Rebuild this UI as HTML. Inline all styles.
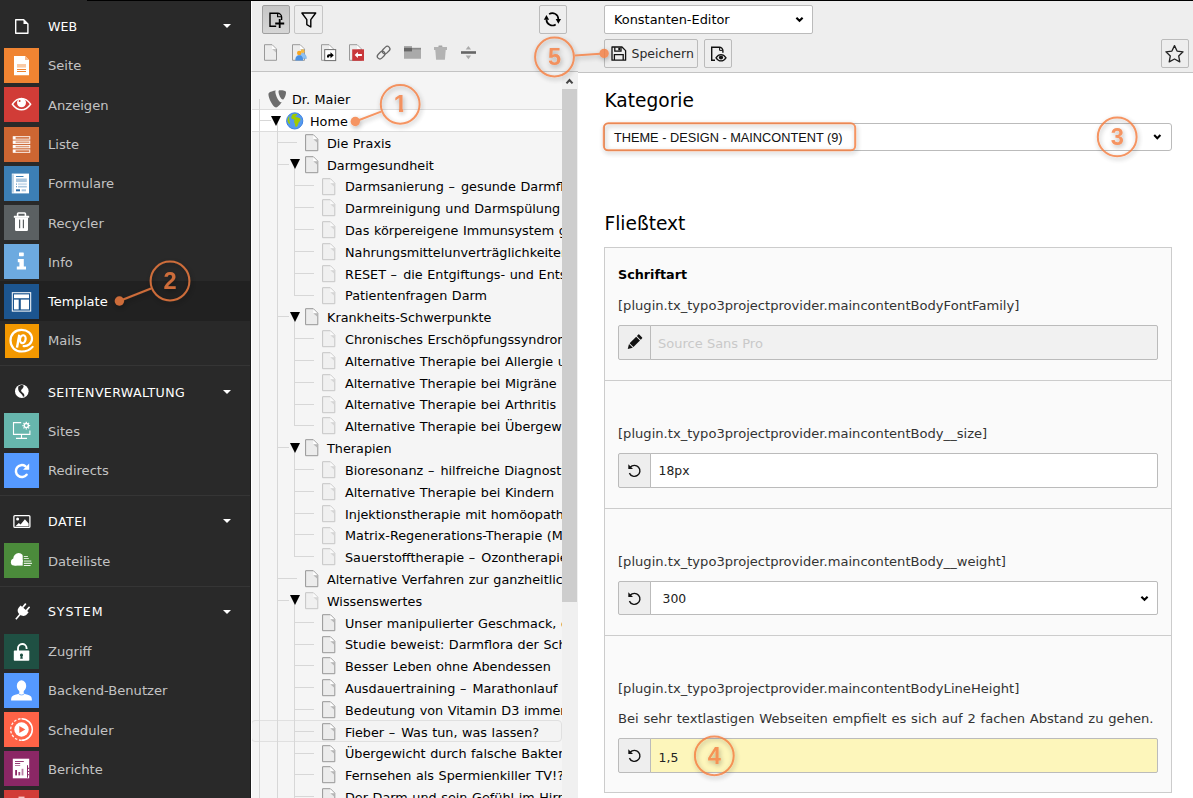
<!DOCTYPE html><html lang="de"><head><meta charset="utf-8"><title>TYPO3 Konstanten-Editor</title><style>
*{box-sizing:border-box;margin:0;padding:0}
html,body{width:1193px;height:798px;overflow:hidden;background:#fff}
body{position:relative;font-family:"DejaVu Sans","Liberation Sans",sans-serif;font-size:13px;color:#000}
.abs{position:absolute}
#side{position:absolute;left:0;top:0;width:251px;height:798px;background:#292929;overflow:hidden;border-right:1px solid #1c1c1c}
#side .sq{position:absolute;left:4px;width:35px;height:35px}
#side .lbl{position:absolute;left:48px;color:#c3c3c3;font-size:13.1px;line-height:16px;white-space:nowrap}
#side .hd{position:absolute;left:48px;color:#fff;font-size:12.6px;line-height:16px;white-space:nowrap}
#side .car{position:absolute;left:223px;width:0;height:0;border-left:4.5px solid transparent;border-right:4.5px solid transparent;border-top:4.5px solid #fff}
#side .div{position:absolute;left:0;width:251px;height:1px;background:#353535}
#topline{position:absolute;left:87px;top:0;width:1106px;height:1px;background:#000;z-index:50}
#tbar{position:absolute;left:251px;top:0;width:327px;height:72px;background:#eeeeee;border-bottom:1px solid #c3c3c3;border-left:1px solid #fff}
#tbar2{position:absolute;left:578px;top:0;width:615px;height:73px;background:#eeeeee;border-bottom:1px solid #c3c3c3}
.btn{position:absolute;border:1px solid #bbb;border-radius:2px;background:#eee}
#tree{position:absolute;left:251px;top:72px;width:311px;height:726px;background:#f5f5f5;overflow:hidden}
#tree .t{position:absolute;word-spacing:.5px;font-size:12.8px;line-height:16px;white-space:nowrap;color:#000}
#tree .vl{position:absolute;width:1px;background:#d7d7d7}
#tree .hl{position:absolute;height:1px;background:#d7d7d7}
#tree .tri{position:absolute;width:0;height:0;border-left:5.5px solid transparent;border-right:5.5px solid transparent;border-top:10px solid #000}
#sb{position:absolute;left:562px;top:72px;width:16px;height:726px;background:#f0f0f0}
#sb .th{position:absolute;left:0;top:17px;width:15px;height:513px;background:#cdcdcd}
#main{position:absolute;left:578px;top:73px;width:615px;height:725px;background:#fff;overflow:hidden}
h2{position:absolute;font-weight:normal;font-size:18.6px;line-height:24px;white-space:nowrap}
.inp{position:absolute;border:1px solid #bbb;background:#fff;border-radius:2px}
.addon{position:absolute;border:1px solid #bbb;background:#eee;border-radius:2px 0 0 2px}
.txt{position:absolute;white-space:nowrap;font-size:13.1px;line-height:16px}
</style></head><body>
<div id="side">
<div class="abs" style="left:0;top:281px;width:251px;height:40px;background:#212121"></div>
<div class="sq" style="top:48.00px;background:#f08432"><svg width="35" height="35" viewBox="0 0 35 35" style="position:absolute;left:0;top:0;"><path d="M10 8h11l4 4v15.2H10z" fill="#fff"/><path d="M21 8l4 4h-4z" fill="#f7b88a"/><rect x="13" y="16" width="9" height="3.6" fill="#f9c9a4"/><rect x="13" y="21" width="9" height="1" fill="#f08432"/><rect x="13" y="23" width="9" height="1" fill="#f08432"/></svg></div>
<div class="lbl" style="top:58.20px;">Seite</div>
<div class="sq" style="top:87.29px;background:#d13c37"><svg width="35" height="35" viewBox="0 0 35 35" style="position:absolute;left:0;top:0;"><path d="M8.4 17.2C11.5 12.6 14.6 11.4 17.5 11.4s6 1.2 9.1 5.8c-3.1 4.3-6.2 5.6-9.1 5.6s-6-1.3-9.1-5.6z" fill="none" stroke="#fff" stroke-width="1.5"/><circle cx="17.5" cy="15.8" r="4.5" fill="#fff"/><circle cx="15.6" cy="14" r="1" fill="#d13c37"/></svg></div>
<div class="lbl" style="top:98.49px;">Anzeigen</div>
<div class="sq" style="top:126.58px;background:#cd6632"><svg width="35" height="35" viewBox="0 0 35 35" style="position:absolute;left:0;top:0;"><rect x="9.2" y="9.700000000000001" width="16.6" height="2.4" fill="none" stroke="#fff" stroke-width=".9"/><rect x="9.2" y="9.700000000000001" width="2.4" height="2.4" fill="#fff"/><rect x="9.2" y="14.0" width="16.6" height="2.4" fill="rgba(255,255,255,.35)" stroke="#fff" stroke-width=".9"/><rect x="9.2" y="14.0" width="2.4" height="2.4" fill="#fff"/><rect x="9.2" y="18.4" width="16.6" height="2.4" fill="rgba(255,255,255,.35)" stroke="#fff" stroke-width=".9"/><rect x="9.2" y="18.4" width="2.4" height="2.4" fill="#fff"/><rect x="9.2" y="22.9" width="16.6" height="2.4" fill="none" stroke="#fff" stroke-width=".9"/><rect x="9.2" y="22.9" width="2.4" height="2.4" fill="#fff"/></svg></div>
<div class="lbl" style="top:136.78px;">Liste</div>
<div class="sq" style="top:165.87px;background:#3c7fb5"><svg width="35" height="35" viewBox="0 0 35 35" style="position:absolute;left:0;top:0;"><rect x="7.8" y="7.6" width="17.2" height="19.8" fill="#fff"/><rect x="8.6" y="8.4" width=".8" height="18.2" fill="#3c7fb5" opacity=".8"/><rect x="12" y="10" width="7.5" height="1" fill="#3c7fb5"/><rect x="12" y="12.5" width="10.8" height="3.6" fill="#a9c6de"/><rect x="12" y="17.6" width="1" height="1" fill="#3c7fb5"/><rect x="14" y="17.3" width="8.8" height="1.6" fill="#c5d9ea"/><rect x="12" y="20.2" width="1" height="1" fill="#3c7fb5"/><rect x="14" y="19.9" width="8.8" height="1.6" fill="#a9c6de"/><rect x="12" y="23.3" width="4" height="2" fill="#2a6ba5"/><rect x="17.6" y="23.3" width="4.4" height="2" fill="#a9c6de"/></svg></div>
<div class="lbl" style="top:176.07px;">Formulare</div>
<div class="sq" style="top:205.16px;background:#5b6062"><svg width="35" height="35" viewBox="0 0 35 35" style="position:absolute;left:0;top:0;"><path d="M13.6 11v-2.2a.8.8 0 0 1 .8-.8h6.2a.8.8 0 0 1 .8.8V11" fill="none" stroke="#fff" stroke-width="1.6"/><rect x="9.8" y="10.8" width="15.4" height="2" rx=".6" fill="#fff"/><path d="M11 12.6h13v12.2a1.2 1.2 0 0 1-1.2 1.2H12.2a1.2 1.2 0 0 1-1.2-1.2z" fill="#fff"/><rect x="15" y="14.6" width="1.2" height="8.6" fill="#5b6062"/><rect x="18.8" y="14.6" width="1.2" height="8.6" fill="#5b6062"/></svg></div>
<div class="lbl" style="top:216.36px;">Recycler</div>
<div class="sq" style="top:244.45px;background:#6daae0"><svg width="35" height="35" viewBox="0 0 35 35" style="position:absolute;left:0;top:0;"><rect x="15" y="8.4" width="4.8" height="3.8" rx=".6" fill="#fff"/><path d="M13.8 15h6v7.4h2.2v3.2h-9.2v-3.2h2.6v-4.2h-1.6z" fill="#fff"/></svg></div>
<div class="lbl" style="top:254.65px;">Info</div>
<div class="sq" style="top:283.74px;background:#1c558f"><svg width="35" height="35" viewBox="0 0 35 35" style="position:absolute;left:0;top:0;"><rect x="8.3" y="8.7" width="18.4" height="18.4" fill="none" stroke="#fff" stroke-width="1"/><rect x="10" y="10.4" width="15" height="3.8" fill="#fff"/><rect x="10" y="15.6" width="4.7" height="9.8" fill="#fff"/><rect x="16.8" y="15.6" width="8.2" height="9.8" fill="#fff"/></svg></div>
<div class="lbl" style="top:293.94px;color:#fff">Template</div>
<div class="sq" style="top:323.03px;background:#f39800"><svg width="35" height="35" viewBox="0 0 35 35" style="position:absolute;left:0;top:0;"><rect x="0" y="0" width="35" height="35" fill="#292929"/><rect x="1" y="1" width="34" height="34" fill="#f39800"/><g transform="translate(0 .6)"><path d="M19.600 22.500C23.500 23 28 20 28 15.200C28 9.800 23.500 6.300 17.400 6.300C11 6.300 6.500 10.700 6.500 17C6.500 23.300 11 27.900 17.600 27.900C22 27.900 26 26.400 28.600 23.300" fill="none" stroke="#fff" stroke-width="2.200" stroke-linecap="round"/><path d="M15.300 11.200L13 24" stroke="#fff" stroke-width="2.400" fill="none"/><ellipse cx="18.800" cy="15.600" rx="2.800" ry="4" transform="rotate(12 18.800 15.600)" fill="none" stroke="#fff" stroke-width="2.200"/></g></svg></div>
<div class="lbl" style="top:333.23px;">Mails</div>
<div class="hd" style="top:19.00px;">WEB</div>
<div class="car" style="top:24px"></div>
<svg width="16" height="17" viewBox="0 0 16 17" style="position:absolute;left:14px;top:18px"><path d="M1.700 1.700h8l4.200 4.200v9.400H1.700z" fill="none" stroke="#fff" stroke-width="1.400" stroke-linejoin="round"/><path d="M9.500 1.700v4.400h4.400z" fill="#fff"/></svg>
<div class="div" style="top:365px"></div>
<div class="hd" style="top:385.00px;letter-spacing:.36px">SEITENVERWALTUNG</div>
<div class="car" style="top:390px"></div>
<svg width="16" height="16" viewBox="0 0 16 16" style="position:absolute;left:14px;top:383px"><circle cx="7.800" cy="8.200" r="6.800" fill="#fff"/><path d="M4.300 3.500c1-.9 2.400-1.500 3.800-1.500l1.400.5c.3 1.200-.3 2.300-1.100 3.200-.8.900-1.500 1.300-1.200 2.300.3 1 1.500 1.600 2.400 2.600.7.800 1 1.800.6 3.200l-1.300-.3c-.3-1.400-1.300-2.200-2.300-3.200-1-1-2-2-2.300-3.600-.2-1.200-.2-2.300 0-3.200z" fill="#292929"/></svg>
<div class="sq" style="top:413.00px;background:#67b6ad"><svg width="35" height="35" viewBox="0 0 35 35" style="position:absolute;left:0;top:0;"><path d="M17.2 9.600H9.500v11.800h16.400v-4" fill="none" stroke="#fff" stroke-width="1.1"/><path d="M17.500 21.400v3.800M12 25.400h11" stroke="#fff" stroke-width="1.1" fill="none"/><circle cx="22.3" cy="12.6" r="2.100" fill="none" stroke="#fff" stroke-width="1.300"/><path d="M25.00 12.60L26.20 12.60M24.21 14.51L25.06 15.36M22.30 15.30L22.30 16.50M20.39 14.51L19.54 15.36M19.60 12.60L18.40 12.60M20.39 10.69L19.54 9.84M22.30 9.90L22.30 8.70M24.21 10.69L25.06 9.84" stroke="#fff" stroke-width="1.300" fill="none"/></svg></div>
<div class="lbl" style="top:424.00px;">Sites</div>
<div class="sq" style="top:453.00px;background:#5599ff"><svg width="35" height="35" viewBox="0 0 35 35" style="position:absolute;left:0;top:0;"><path d="M22.600 21.800a6 6 0 1 1-1.2-8.600" fill="none" stroke="#fff" stroke-width="2.500" stroke-linecap="round"/><path d="M25.200 10.600v6.200h-6.200z" fill="#fff"/></svg></div>
<div class="lbl" style="top:463.00px;">Redirects</div>
<div class="div" style="top:495px"></div>
<div class="hd" style="top:513.50px;letter-spacing:.44px">DATEI</div>
<div class="car" style="top:519px"></div>
<svg width="18" height="15" viewBox="0 0 18 15" style="position:absolute;left:13px;top:514px"><rect x=".9" y="1.600" width="16" height="11.800" rx="1" fill="none" stroke="#fff" stroke-width="1.300"/><circle cx="4.600" cy="5" r="1.500" fill="#fff"/><path d="M2.400 12.200l3.400-3.300 1.800 1.500 4.300-5.200 3.700 4.400v2.600z" fill="#fff"/></svg>
<div class="sq" style="top:543.00px;background:#4b8b3b"><svg width="35" height="35" viewBox="0 0 35 35" style="position:absolute;left:0;top:0;"><clipPath id="cl"><rect x="0" y="0" width="18.700" height="22.800"/></clipPath><g clip-path="url(#cl)" fill="#fff"><circle cx="10.500" cy="19.200" r="3.600"/><circle cx="14.700" cy="15.500" r="5.400"/><rect x="10.500" y="17" width="9" height="5.800"/></g><rect x="19.800" y="13.100" width="4.100" height=".9" fill="#fff" opacity=".9"/><rect x="19.800" y="15.100" width="5" height=".9" fill="#fff" opacity=".85"/><rect x="19.800" y="17.300" width="7.500" height="1.600" fill="#fff" opacity=".55"/><rect x="19.800" y="19.800" width="8.200" height="1.100" fill="#fff" opacity=".9"/><rect x="19.800" y="22" width="6.800" height=".9" fill="#fff"/></svg></div>
<div class="lbl" style="top:554.00px;">Dateiliste</div>
<div class="div" style="top:586px"></div>
<div class="hd" style="top:604.20px;letter-spacing:.86px">SYSTEM</div>
<div class="car" style="top:610px"></div>
<svg width="18" height="18" viewBox="0 0 18 18" style="position:absolute;left:13px;top:603px"><g transform="rotate(40 9 9)"><rect x="5.700" y="0" width="1.700" height="5.600" rx=".8" fill="#fff"/><rect x="10.600" y="0" width="1.700" height="5.600" rx=".8" fill="#fff"/><path d="M3.700 5h10.600v2.600c0 3-2.300 4.800-5.300 4.800s-5.300-1.800-5.300-4.800z" fill="#fff"/><rect x="8.200" y="12" width="1.600" height="6.500" fill="#fff"/></g></svg>
<div class="sq" style="top:633.80px;background:#1f5043"><svg width="35" height="35" viewBox="0 0 35 35" style="position:absolute;left:0;top:0;"><rect x="9.800" y="16.600" width="15.500" height="10.200" rx=".8" fill="#fff"/><path d="M14 17v-2.500a4.300 4.300 0 0 1 8.600-.3v.8" fill="none" stroke="#fff" stroke-width="1.900"/><path d="M17.500 19.500a1.600 1.600 0 0 1 .9 2.900l.4 2.400h-2.600l.4-2.400a1.600 1.600 0 0 1 .9-2.900z" fill="#1f5043"/></svg></div>
<div class="lbl" style="top:643.50px;">Zugriff</div>
<div class="sq" style="top:672.59px;background:#5599ff"><svg width="35" height="35" viewBox="0 0 35 35" style="position:absolute;left:0;top:0;"><ellipse cx="17.500" cy="13" rx="4.700" ry="5.700" fill="#fff"/><path d="M15.300 17h4.400v3.400c2.400 1 6 1.400 7.300 3.200.7 1 .9 2.400.9 4H7.100c0-1.600.2-3 .9-4 1.300-1.800 4.900-2.200 7.300-3.200z" fill="#fff"/><path d="M14.600 20.800a3.400 2.400 0 0 0 5.800 0" fill="none" stroke="#5599ff" stroke-width=".7"/></svg></div>
<div class="lbl" style="top:683.49px;">Backend-Benutzer</div>
<div class="sq" style="top:711.88px;background:#ff6347"><svg width="35" height="35" viewBox="0 0 35 35" style="position:absolute;left:0;top:0;"><circle cx="17.500" cy="17.500" r="7.200" fill="#fff"/><path d="M15.300 13.900l6 3.600-6 3.600z" fill="#ff6347"/><path d="M17.500 6.700a10.800 10.800 0 0 1 0 21.600" fill="none" stroke="#fff" stroke-width="1.500"/><path d="M17.500 28.300a10.800 10.800 0 0 1 0-21.600" fill="none" stroke="#fff" stroke-width="1.300" stroke-dasharray="2.600 1.700" opacity=".9"/></svg></div>
<div class="lbl" style="top:722.78px;">Scheduler</div>
<div class="sq" style="top:751.17px;background:#8b2765"><svg width="35" height="35" viewBox="0 0 35 35" style="position:absolute;left:0;top:0;"><rect x="8.800" y="7.700" width="16.400" height="19.600" fill="#fff"/><rect x="11" y="10" width="8.800" height=".9" fill="#8b2765"/><rect x="11" y="12" width="5.200" height=".9" fill="#8b2765"/><rect x="11" y="14" width="5.200" height=".9" fill="#8b2765" opacity=".7"/><rect x="11.200" y="19" width="1.800" height="5.400" fill="#8b2765"/><rect x="14.400" y="21" width="1.800" height="3.400" fill="#8b2765" opacity=".85"/><rect x="17.600" y="17.800" width="1.800" height="6.600" fill="#8b2765" opacity=".6"/><rect x="23" y="14.200" width="1" height="12.500" fill="#8b2765"/><rect x="24" y="16.800" width="1.200" height="1" fill="#8b2765"/><rect x="24" y="20" width="1.200" height="1" fill="#8b2765"/><rect x="24" y="23.200" width="1.200" height="1" fill="#8b2765"/></svg></div>
<div class="lbl" style="top:762.07px;">Berichte</div>
<div class="sq" style="top:790.46px;background:#d13c37"><svg width="35" height="35" viewBox="0 0 35 35" style="position:absolute;left:0;top:0;"><rect x="14.500" y="6.600" width="6" height="2" fill="#f4c8c6"/></svg></div>
</div>
<div id="tbar"></div><div id="tbar2"></div><div id="topline"></div>
<div class="btn" style="left:262px;top:5px;width:28px;height:29px;background:linear-gradient(#c6c6c6,#d6d6d6);border-color:#a0a0a0"><svg width="28" height="29" viewBox="0 0 28 29" style="position:absolute;left:-1px;top:-1px;"><path d="M14.200 21.200H8v-13h7.600a4 4 0 0 1 4 4v2.800" fill="none" stroke="#000" stroke-width="1.400"/><path d="M15.600 8.400v3.300h3.600" fill="none" stroke="#000" stroke-width="1.100"/><path d="M17.700 14v9M13.200 18.500h9" stroke="#000" stroke-width="1.800"/></svg></div>
<div class="btn" style="left:294px;top:5px;width:29px;height:29px;border-color:#c6c6c6"><svg width="28" height="29" viewBox="0 0 28 29" style="position:absolute;left:-1px;top:-1px;"><path d="M7.900 8h13.800l-4.900 6.600v7.400l-4-2.400v-5z" fill="none" stroke="#000" stroke-width="1.400" stroke-linejoin="round"/></svg></div>
<div class="btn" style="left:539px;top:5px;width:28px;height:29px"><svg width="28" height="29" viewBox="0 0 28 29" style="position:absolute;left:-1px;top:-1px;"><g transform="translate(13.4 14.3) scale(1.1) translate(-13.4 -14.3)"><path d="M10.400 9.600a5.400 5.400 0 0 1 8.400 4.600" fill="none" stroke="#000" stroke-width="1.500"/><path d="M16.400 19a5.400 5.400 0 0 1-8.400-4.400" fill="none" stroke="#000" stroke-width="1.500"/><path d="M16.400 14h4.800l-2.400 4.400z" fill="#000"/><path d="M5.600 14.800h4.800l-2.400-4.500z" fill="#000"/></g></svg></div>
<svg width="1193" height="72" viewBox="0 0 1193 72" style="position:absolute;left:0;top:0"><g transform="translate(264,44.2)"><path d="M.5.500h7.600l4.400 4.400v11.200H.5z" fill="#ececec" stroke="#999" stroke-width="1"/><path d="M8.100 1v3.900h3.900z" fill="#fff"/><path d="M8.100 4.900h3.900v3.400z" fill="#c4c4c4"/></g><g transform="translate(292,44.2)"><path d="M.5.500h7.600l4.400 4.400v11.200H.5z" fill="#ececec" stroke="#999" stroke-width="1"/><path d="M8.100 1v3.900h3.900z" fill="#fff"/><path d="M8.100 4.900h3.900v3.400z" fill="#c4c4c4"/></g><g><circle cx="302.600" cy="51.200" r="1.900" fill="#f5b93f"/><path d="M299.700 58.500c0-3.600 1.200-5.200 2.900-5.200s3.800 1.600 3.800 5.200z" fill="#8fc1f2" stroke="#6ea6de" stroke-width=".5"/><circle cx="299.200" cy="53" r="2.200" fill="#f5a623"/><path d="M295.300 60.400c0-3.800 1.500-5.200 3.900-5.200s3.900 1.400 3.900 5.200z" fill="#4a90e2"/></g><g transform="translate(321,44.2)"><path d="M.5.500h7.600l4.400 4.400v11.200H.5z" fill="#ececec" stroke="#999" stroke-width="1"/><path d="M8.100 1v3.900h3.900z" fill="#fff"/><path d="M8.100 4.900h3.900v3.400z" fill="#c4c4c4"/></g><rect x="324.700" y="49.600" width="11" height="11" fill="#fff" stroke="#6f6f6f" stroke-width="1"/><path d="M327 57.500v-1.500a1.800 1.800 0 0 1 1.800-1.800h1.700v-2l3.300 3-3.300 3v-2h-1.400v1.300z" fill="#000"/><g transform="translate(349,44.2)"><path d="M.5.500h7.600l4.400 4.400v11.200H.5z" fill="#ececec" stroke="#999" stroke-width="1"/><path d="M8.100 1v3.900h3.900z" fill="#fff"/><path d="M8.100 4.900h3.900v3.400z" fill="#c4c4c4"/></g><rect x="352.200" y="49.300" width="11.800" height="11.500" fill="#c9373a"/><path d="M354.600 55l3.300-3v2h4v2h-4v2z" fill="#fff"/><g transform="rotate(-45 383.600 52.600)" fill="none" stroke="#666" stroke-width="1.250"><rect x="375.800" y="50" width="8.600" height="5.200" rx="2.600"/><rect x="382.800" y="50" width="8.600" height="5.200" rx="2.600"/></g><path d="M404 46h8v2h9v10.800h-17z" fill="#aaa"/><path d="M404 47.800h8v3.600h-8z" fill="#666"/><path d="M412 47.800h9v1.700h-9z" fill="#8a8a8a"/><rect x="438.400" y="45.400" width="4" height="1.800" rx=".6" fill="#a5a5a5"/><rect x="434" y="47" width="13" height="3" fill="#b3b3b3"/><path d="M435.300 50h10.400l-.8 9.800h-8.800z" fill="#b3b3b3"/><rect x="461" y="51.200" width="15" height="2.600" fill="#666"/><path d="M465.700 49.500l2.700-3.600 2.700 3.600z" fill="#aaa"/><path d="M465.700 55.600h5.400l-2.700 3.600z" fill="#aaa"/></svg>
<div class="btn" style="left:604px;top:5px;width:209px;height:29px;background:#fff"><span class="txt" style="left:9px;top:6px;font-size:12.9px">Konstanten-Editor</span><svg width="209" height="29" viewBox="0 0 209 29" style="position:absolute;left:-1px;top:-1px;"><path d="M192.4 12.75l3.1 3.1 3.1-3.1" fill="none" stroke="#000" stroke-width="2.1"/></svg></div>
<div class="btn" style="left:604px;top:39px;width:94px;height:29px"><span class="txt" style="left:26.5px;top:6.2px;color:#2a2a2a;font-size:12.5px">Speichern</span><svg width="30" height="29" viewBox="0 0 30 29" style="position:absolute;left:-1px;top:-1px;"><path d="M8 8h10l3.600 3.600v9.600H8z" fill="none" stroke="#111" stroke-width="1.300" stroke-linejoin="round"/><path d="M10.800 8.200v4h6.200v-4" fill="none" stroke="#111" stroke-width="1.300"/><rect x="14.300" y="8.800" width="1.900" height="2.600" fill="#111"/><path d="M10.400 21v-5.300h8.800V21" fill="none" stroke="#111" stroke-width="1.300"/></svg></div>
<div class="btn" style="left:704px;top:39px;width:28px;height:29px"><svg width="28" height="29" viewBox="0 0 28 29" style="position:absolute;left:-1px;top:-1px;"><path d="M11 21.200H7.700v-13h7.600a3.600 3.600 0 0 1 3.600 3.600v2" fill="none" stroke="#111" stroke-width="1.400"/><path d="M15.600 8.400v3h3" fill="none" stroke="#111" stroke-width="1"/><path d="M12 18.800c1.600-2.400 3.300-3.200 5-3.200s3.400.8 5 3.200c-1.600 2.300-3.300 3.100-5 3.100s-3.400-.8-5-3.100z" fill="#eee" stroke="#111" stroke-width="1.300"/><circle cx="17" cy="18.500" r="2.100" fill="#111"/></svg></div>
<div class="btn" style="left:1161px;top:39px;width:28px;height:29px"><svg width="28" height="29" viewBox="0 0 28 29" style="position:absolute;left:-1px;top:-1px;"><polygon points="13.50,6.60 16.09,12.04 22.06,12.82 17.68,16.96 18.79,22.88 13.50,20.00 8.21,22.88 9.32,16.96 4.94,12.82 10.91,12.04" fill="none" stroke="#222" stroke-width="1.300" stroke-linejoin="round"/></svg></div>
<div id="tree">
<div class="abs" style="left:0;top:36.81px;width:311px;height:23px;background:#fff;border-top:1px solid #ddd;border-bottom:1px solid #ddd"></div>
<div class="abs" style="left:0;top:648.19px;width:311px;height:22px;background:#f3f3f3;border:1px solid #e0e0e0;border-radius:4px"></div>
<div class="vl" style="left:7.9px;top:26.7px;height:800px"></div>
<div class="vl" style="left:26.0px;top:48.5px;height:800px"></div>
<div class="vl" style="left:42.9px;top:92.1px;height:130.9px"></div>
<div class="vl" style="left:42.9px;top:244.8px;height:109.0px"></div>
<div class="vl" style="left:42.9px;top:375.7px;height:109.1px"></div>
<div class="vl" style="left:42.9px;top:528.3px;height:370.8px"></div>
<div class="abs" style="left:17px;top:17.7px"><svg width="20" height="19" viewBox="0 0 20 19" style="display:block"><path transform="translate(-2.300,-2.200) scale(1.440,1.390)" d="M11.100 10.300c-.2 0-.3.100-.5.100-1.600 0-3.900-5.500-3.900-7.400 0-.7.200-.9.400-1.100-1.900.2-4.200.9-4.900 1.800-.2.200-.3.600-.3 1 0 2.900 3.100 9.500 5.300 9.500 1 0 2.700-1.700 3.900-3.900M10.100 1.800c2 0 4 .3 4 1.500 0 2.300-1.500 5.100-2.200 5.100-1.300 0-3-3.700-3-5.600 0-.8.300-1 1.200-1" fill="#6d6d6d"/></svg></div>
<div class="t" style="left:41.0px;top:20.1px">Dr. Maier</div>
<div class="hl" style="left:7.9px;top:48.0px;width:12px"></div>
<div class="tri" style="left:20.4px;top:43.5px"></div>
<div class="abs" style="left:35px;top:39.5px"><svg width="18" height="18" viewBox="0 0 18 18" style="display:block"><circle cx="8.700" cy="8.900" r="8.100" fill="#5599f0" stroke="#3f83e0" stroke-width="1"/><path d="M6.500 2.400c1.400-.8 3-.9 4.400-.5.600.5.400 1.200-.3 1.400-.8.200-1.300.6-1.100 1.400.2.700 1.500.3 2.300.8.900.6 2.200.4 2.600 1.400.4 1-.6 2.400-1.500 3.400-.8.900-.7 2-1.300 3.200-.4.800-1.200 1.600-1.900 1.300-.7-.3-.5-1.400-.6-2.400-.1-1-.9-1.500-1-2.500-.1-.9.500-1.300.2-2-.4-.9-2-.4-2.700-1.300-.6-.8-.3-2 .2-2.800.3-.5.300-1 .7-1.400z" fill="#a2cb00"/><path d="M1.500 7.500c.3-1.500 1-2.800 2-3.800.3.700-.2 1.500-.3 2.300-.1.900.5 1.500.3 2.400-.2.800.5 1.600.5 2.500 0 .6-.3 1.100-.8 1-1.200-1.200-1.900-2.800-1.700-4.400z" fill="#a2cb00"/></svg></div>
<div class="t" style="left:59.0px;top:41.9px">Home</div>
<div class="hl" style="left:26.0px;top:69.8px;width:20px"></div>
<div class="abs" style="left:53.9px;top:61.9px"><svg width="14" height="18" viewBox="0 0 14 18" style="display:block"><path d="M.6.700h7.700l4.500 4.500v11.500H.6z" fill="#ececec" stroke="#979797" stroke-width="1"/><path d="M8.300 1.200v4h4z" fill="#fff"/><path d="M8.300 5.200h4v3.600z" fill="#b8b8b8"/></svg></div>
<div class="t" style="left:76.0px;top:63.7px">Die Praxis</div>
<div class="hl" style="left:26.0px;top:91.6px;width:12px"></div>
<div class="tri" style="left:38.5px;top:87.1px"></div>
<div class="abs" style="left:53.9px;top:83.7px"><svg width="14" height="18" viewBox="0 0 14 18" style="display:block"><path d="M.6.700h7.700l4.500 4.500v11.500H.6z" fill="#ececec" stroke="#979797" stroke-width="1"/><path d="M8.300 1.200v4h4z" fill="#fff"/><path d="M8.300 5.200h4v3.600z" fill="#b8b8b8"/></svg></div>
<div class="t" style="left:76.0px;top:85.5px">Darmgesundheit</div>
<div class="hl" style="left:42.9px;top:113.4px;width:20px"></div>
<div class="abs" style="left:71.2px;top:105.5px"><svg width="14" height="18" viewBox="0 0 14 18" style="display:block" opacity="0.5"><path d="M.6.700h7.700l4.500 4.500v11.500H.6z" fill="#ececec" stroke="#979797" stroke-width="1"/><path d="M8.300 1.200v4h4z" fill="#fff"/><path d="M8.300 5.200h4v3.600z" fill="#b8b8b8"/></svg></div>
<div class="t" style="left:94.0px;top:107.3px">Darmsanierung <span style="letter-spacing:1.6px">–</span> gesunde Darmflora</div>
<div class="hl" style="left:42.9px;top:135.2px;width:20px"></div>
<div class="abs" style="left:71.2px;top:127.3px"><svg width="14" height="18" viewBox="0 0 14 18" style="display:block" opacity="0.5"><path d="M.6.700h7.700l4.500 4.500v11.500H.6z" fill="#ececec" stroke="#979797" stroke-width="1"/><path d="M8.300 1.200v4h4z" fill="#fff"/><path d="M8.300 5.200h4v3.600z" fill="#b8b8b8"/></svg></div>
<div class="t" style="left:94.0px;top:129.2px">Darmreinigung und Darmspülung richtig</div>
<div class="hl" style="left:42.9px;top:157.1px;width:20px"></div>
<div class="abs" style="left:71.2px;top:149.2px"><svg width="14" height="18" viewBox="0 0 14 18" style="display:block" opacity="0.5"><path d="M.6.700h7.700l4.500 4.500v11.500H.6z" fill="#ececec" stroke="#979797" stroke-width="1"/><path d="M8.300 1.200v4h4z" fill="#fff"/><path d="M8.300 5.200h4v3.600z" fill="#b8b8b8"/></svg></div>
<div class="t" style="left:94.0px;top:151.0px">Das körpereigene Immunsystem gezielt</div>
<div class="hl" style="left:42.9px;top:178.9px;width:20px"></div>
<div class="abs" style="left:71.2px;top:171.0px"><svg width="14" height="18" viewBox="0 0 14 18" style="display:block" opacity="0.5"><path d="M.6.700h7.700l4.500 4.500v11.500H.6z" fill="#ececec" stroke="#979797" stroke-width="1"/><path d="M8.300 1.200v4h4z" fill="#fff"/><path d="M8.300 5.200h4v3.600z" fill="#b8b8b8"/></svg></div>
<div class="t" style="left:94.0px;top:172.8px">Nahrungsmittelunverträglichkeiten</div>
<div class="hl" style="left:42.9px;top:200.7px;width:20px"></div>
<div class="abs" style="left:71.2px;top:192.8px"><svg width="14" height="18" viewBox="0 0 14 18" style="display:block" opacity="0.5"><path d="M.6.700h7.700l4.500 4.500v11.500H.6z" fill="#ececec" stroke="#979797" stroke-width="1"/><path d="M8.300 1.200v4h4z" fill="#fff"/><path d="M8.300 5.200h4v3.600z" fill="#b8b8b8"/></svg></div>
<div class="t" style="left:94.0px;top:194.6px">RESET <span style="letter-spacing:1.6px">–</span> die Entgiftungs- und Entsäuerung</div>
<div class="hl" style="left:42.9px;top:222.5px;width:20px"></div>
<div class="abs" style="left:71.2px;top:214.6px"><svg width="14" height="18" viewBox="0 0 14 18" style="display:block" opacity="0.5"><path d="M.6.700h7.700l4.500 4.500v11.500H.6z" fill="#ececec" stroke="#979797" stroke-width="1"/><path d="M8.300 1.200v4h4z" fill="#fff"/><path d="M8.300 5.200h4v3.600z" fill="#b8b8b8"/></svg></div>
<div class="t" style="left:94.0px;top:216.4px">Patientenfragen Darm</div>
<div class="hl" style="left:26.0px;top:244.3px;width:12px"></div>
<div class="tri" style="left:38.5px;top:239.8px"></div>
<div class="abs" style="left:53.9px;top:236.4px"><svg width="14" height="18" viewBox="0 0 14 18" style="display:block"><path d="M.6.700h7.700l4.500 4.500v11.500H.6z" fill="#ececec" stroke="#979797" stroke-width="1"/><path d="M8.300 1.200v4h4z" fill="#fff"/><path d="M8.300 5.200h4v3.600z" fill="#b8b8b8"/></svg></div>
<div class="t" style="left:76.0px;top:238.2px">Krankheits-Schwerpunkte</div>
<div class="hl" style="left:42.9px;top:266.1px;width:20px"></div>
<div class="abs" style="left:71.2px;top:258.2px"><svg width="14" height="18" viewBox="0 0 14 18" style="display:block" opacity="0.5"><path d="M.6.700h7.700l4.500 4.500v11.500H.6z" fill="#ececec" stroke="#979797" stroke-width="1"/><path d="M8.300 1.200v4h4z" fill="#fff"/><path d="M8.300 5.200h4v3.600z" fill="#b8b8b8"/></svg></div>
<div class="t" style="left:94.0px;top:260.0px">Chronisches Erschöpfungssyndrom</div>
<div class="hl" style="left:42.9px;top:287.9px;width:20px"></div>
<div class="abs" style="left:71.2px;top:280.0px"><svg width="14" height="18" viewBox="0 0 14 18" style="display:block" opacity="0.5"><path d="M.6.700h7.700l4.500 4.500v11.500H.6z" fill="#ececec" stroke="#979797" stroke-width="1"/><path d="M8.300 1.200v4h4z" fill="#fff"/><path d="M8.300 5.200h4v3.600z" fill="#b8b8b8"/></svg></div>
<div class="t" style="left:94.0px;top:281.8px">Alternative Therapie bei Allergie und</div>
<div class="hl" style="left:42.9px;top:309.7px;width:20px"></div>
<div class="abs" style="left:71.2px;top:301.8px"><svg width="14" height="18" viewBox="0 0 14 18" style="display:block" opacity="0.5"><path d="M.6.700h7.700l4.500 4.500v11.500H.6z" fill="#ececec" stroke="#979797" stroke-width="1"/><path d="M8.300 1.200v4h4z" fill="#fff"/><path d="M8.300 5.200h4v3.600z" fill="#b8b8b8"/></svg></div>
<div class="t" style="left:94.0px;top:303.6px">Alternative Therapie bei Migräne</div>
<div class="hl" style="left:42.9px;top:331.5px;width:20px"></div>
<div class="abs" style="left:71.2px;top:323.6px"><svg width="14" height="18" viewBox="0 0 14 18" style="display:block" opacity="0.5"><path d="M.6.700h7.700l4.500 4.500v11.500H.6z" fill="#ececec" stroke="#979797" stroke-width="1"/><path d="M8.300 1.200v4h4z" fill="#fff"/><path d="M8.300 5.200h4v3.600z" fill="#b8b8b8"/></svg></div>
<div class="t" style="left:94.0px;top:325.4px">Alternative Therapie bei Arthritis</div>
<div class="hl" style="left:42.9px;top:353.3px;width:20px"></div>
<div class="abs" style="left:71.2px;top:345.4px"><svg width="14" height="18" viewBox="0 0 14 18" style="display:block" opacity="0.5"><path d="M.6.700h7.700l4.500 4.500v11.500H.6z" fill="#ececec" stroke="#979797" stroke-width="1"/><path d="M8.300 1.200v4h4z" fill="#fff"/><path d="M8.300 5.200h4v3.600z" fill="#b8b8b8"/></svg></div>
<div class="t" style="left:94.0px;top:347.2px">Alternative Therapie bei Übergewicht</div>
<div class="hl" style="left:26.0px;top:375.2px;width:12px"></div>
<div class="tri" style="left:38.5px;top:370.7px"></div>
<div class="abs" style="left:53.9px;top:367.3px"><svg width="14" height="18" viewBox="0 0 14 18" style="display:block"><path d="M.6.700h7.700l4.500 4.500v11.500H.6z" fill="#ececec" stroke="#979797" stroke-width="1"/><path d="M8.300 1.200v4h4z" fill="#fff"/><path d="M8.300 5.200h4v3.600z" fill="#b8b8b8"/></svg></div>
<div class="t" style="left:76.0px;top:369.1px">Therapien</div>
<div class="hl" style="left:42.9px;top:397.0px;width:20px"></div>
<div class="abs" style="left:71.2px;top:389.1px"><svg width="14" height="18" viewBox="0 0 14 18" style="display:block" opacity="0.5"><path d="M.6.700h7.700l4.500 4.500v11.500H.6z" fill="#ececec" stroke="#979797" stroke-width="1"/><path d="M8.300 1.200v4h4z" fill="#fff"/><path d="M8.300 5.200h4v3.600z" fill="#b8b8b8"/></svg></div>
<div class="t" style="left:94.0px;top:390.9px">Bioresonanz <span style="letter-spacing:1.6px">–</span> hilfreiche Diagnostik</div>
<div class="hl" style="left:42.9px;top:418.8px;width:20px"></div>
<div class="abs" style="left:71.2px;top:410.9px"><svg width="14" height="18" viewBox="0 0 14 18" style="display:block" opacity="0.5"><path d="M.6.700h7.700l4.500 4.500v11.500H.6z" fill="#ececec" stroke="#979797" stroke-width="1"/><path d="M8.300 1.200v4h4z" fill="#fff"/><path d="M8.300 5.200h4v3.600z" fill="#b8b8b8"/></svg></div>
<div class="t" style="left:94.0px;top:412.7px">Alternative Therapie bei Kindern</div>
<div class="hl" style="left:42.9px;top:440.6px;width:20px"></div>
<div class="abs" style="left:71.2px;top:432.7px"><svg width="14" height="18" viewBox="0 0 14 18" style="display:block" opacity="0.5"><path d="M.6.700h7.700l4.500 4.500v11.500H.6z" fill="#ececec" stroke="#979797" stroke-width="1"/><path d="M8.300 1.200v4h4z" fill="#fff"/><path d="M8.300 5.200h4v3.600z" fill="#b8b8b8"/></svg></div>
<div class="t" style="left:94.0px;top:434.5px">Injektionstherapie mit homöopathischen</div>
<div class="hl" style="left:42.9px;top:462.4px;width:20px"></div>
<div class="abs" style="left:71.2px;top:454.5px"><svg width="14" height="18" viewBox="0 0 14 18" style="display:block" opacity="0.5"><path d="M.6.700h7.700l4.500 4.500v11.500H.6z" fill="#ececec" stroke="#979797" stroke-width="1"/><path d="M8.300 1.200v4h4z" fill="#fff"/><path d="M8.300 5.200h4v3.600z" fill="#b8b8b8"/></svg></div>
<div class="t" style="left:94.0px;top:456.3px">Matrix-Regenerations-Therapie (MRT)</div>
<div class="hl" style="left:42.9px;top:484.2px;width:20px"></div>
<div class="abs" style="left:71.2px;top:476.3px"><svg width="14" height="18" viewBox="0 0 14 18" style="display:block" opacity="0.5"><path d="M.6.700h7.700l4.500 4.500v11.500H.6z" fill="#ececec" stroke="#979797" stroke-width="1"/><path d="M8.300 1.200v4h4z" fill="#fff"/><path d="M8.300 5.200h4v3.600z" fill="#b8b8b8"/></svg></div>
<div class="t" style="left:94.0px;top:478.1px">Sauerstofftherapie <span style="letter-spacing:1.6px">–</span> Ozontherapie</div>
<div class="hl" style="left:26.0px;top:506.0px;width:20px"></div>
<div class="abs" style="left:53.9px;top:498.1px"><svg width="14" height="18" viewBox="0 0 14 18" style="display:block"><path d="M.6.700h7.700l4.500 4.500v11.500H.6z" fill="#ececec" stroke="#979797" stroke-width="1"/><path d="M8.300 1.200v4h4z" fill="#fff"/><path d="M8.300 5.200h4v3.600z" fill="#b8b8b8"/></svg></div>
<div class="t" style="left:76.0px;top:499.9px">Alternative Verfahren zur ganzheitlichen</div>
<div class="hl" style="left:26.0px;top:527.8px;width:12px"></div>
<div class="tri" style="left:38.5px;top:523.3px"></div>
<div class="abs" style="left:53.9px;top:519.9px"><svg width="14" height="18" viewBox="0 0 14 18" style="display:block" opacity="0.5"><path d="M.6.700h7.700l4.500 4.500v11.500H.6z" fill="#ececec" stroke="#979797" stroke-width="1"/><path d="M8.300 1.200v4h4z" fill="#fff"/><path d="M8.300 5.200h4v3.600z" fill="#b8b8b8"/></svg></div>
<div class="t" style="left:76.0px;top:521.7px">Wissenswertes</div>
<div class="hl" style="left:42.9px;top:549.6px;width:20px"></div>
<div class="abs" style="left:71.2px;top:541.7px"><svg width="14" height="18" viewBox="0 0 14 18" style="display:block"><path d="M.6.700h7.700l4.500 4.500v11.500H.6z" fill="#ececec" stroke="#979797" stroke-width="1"/><path d="M8.300 1.200v4h4z" fill="#fff"/><path d="M8.300 5.200h4v3.600z" fill="#b8b8b8"/></svg></div>
<div class="t" style="left:94.0px;top:543.5px">Unser manipulierter Geschmack, oder</div>
<div class="hl" style="left:42.9px;top:571.5px;width:20px"></div>
<div class="abs" style="left:71.2px;top:563.6px"><svg width="14" height="18" viewBox="0 0 14 18" style="display:block"><path d="M.6.700h7.700l4.500 4.500v11.500H.6z" fill="#ececec" stroke="#979797" stroke-width="1"/><path d="M8.300 1.200v4h4z" fill="#fff"/><path d="M8.300 5.200h4v3.600z" fill="#b8b8b8"/></svg></div>
<div class="t" style="left:94.0px;top:565.4px">Studie beweist: Darmflora der Schlanken</div>
<div class="hl" style="left:42.9px;top:593.3px;width:20px"></div>
<div class="abs" style="left:71.2px;top:585.4px"><svg width="14" height="18" viewBox="0 0 14 18" style="display:block"><path d="M.6.700h7.700l4.500 4.500v11.500H.6z" fill="#ececec" stroke="#979797" stroke-width="1"/><path d="M8.300 1.200v4h4z" fill="#fff"/><path d="M8.300 5.200h4v3.600z" fill="#b8b8b8"/></svg></div>
<div class="t" style="left:94.0px;top:587.2px">Besser Leben ohne Abendessen</div>
<div class="hl" style="left:42.9px;top:615.1px;width:20px"></div>
<div class="abs" style="left:71.2px;top:607.2px"><svg width="14" height="18" viewBox="0 0 14 18" style="display:block"><path d="M.6.700h7.700l4.500 4.500v11.500H.6z" fill="#ececec" stroke="#979797" stroke-width="1"/><path d="M8.300 1.200v4h4z" fill="#fff"/><path d="M8.300 5.200h4v3.600z" fill="#b8b8b8"/></svg></div>
<div class="t" style="left:94.0px;top:609.0px">Ausdauertraining <span style="letter-spacing:1.6px">–</span> Marathonlauf</div>
<div class="hl" style="left:42.9px;top:636.9px;width:20px"></div>
<div class="abs" style="left:71.2px;top:629.0px"><svg width="14" height="18" viewBox="0 0 14 18" style="display:block"><path d="M.6.700h7.700l4.500 4.500v11.500H.6z" fill="#ececec" stroke="#979797" stroke-width="1"/><path d="M8.300 1.200v4h4z" fill="#fff"/><path d="M8.300 5.200h4v3.600z" fill="#b8b8b8"/></svg></div>
<div class="t" style="left:94.0px;top:630.8px">Bedeutung von Vitamin D3 immer</div>
<div class="hl" style="left:42.9px;top:658.7px;width:20px"></div>
<div class="abs" style="left:71.2px;top:650.8px"><svg width="14" height="18" viewBox="0 0 14 18" style="display:block"><path d="M.6.700h7.700l4.500 4.500v11.500H.6z" fill="#ececec" stroke="#979797" stroke-width="1"/><path d="M8.300 1.200v4h4z" fill="#fff"/><path d="M8.300 5.200h4v3.600z" fill="#b8b8b8"/></svg></div>
<div class="t" style="left:94.0px;top:652.6px">Fieber <span style="letter-spacing:1.6px">–</span> Was tun, was lassen?</div>
<div class="hl" style="left:42.9px;top:680.5px;width:20px"></div>
<div class="abs" style="left:71.2px;top:672.6px"><svg width="14" height="18" viewBox="0 0 14 18" style="display:block"><path d="M.6.700h7.700l4.500 4.500v11.500H.6z" fill="#ececec" stroke="#979797" stroke-width="1"/><path d="M8.300 1.200v4h4z" fill="#fff"/><path d="M8.300 5.200h4v3.600z" fill="#b8b8b8"/></svg></div>
<div class="t" style="left:94.0px;top:674.4px">Übergewicht durch falsche Bakterien</div>
<div class="hl" style="left:42.9px;top:702.3px;width:20px"></div>
<div class="abs" style="left:71.2px;top:694.4px"><svg width="14" height="18" viewBox="0 0 14 18" style="display:block"><path d="M.6.700h7.700l4.500 4.500v11.500H.6z" fill="#ececec" stroke="#979797" stroke-width="1"/><path d="M8.300 1.200v4h4z" fill="#fff"/><path d="M8.300 5.200h4v3.600z" fill="#b8b8b8"/></svg></div>
<div class="t" style="left:94.0px;top:696.2px">Fernsehen als Spermienkiller TV!?</div>
<div class="hl" style="left:42.9px;top:724.1px;width:20px"></div>
<div class="abs" style="left:71.2px;top:716.2px"><svg width="14" height="18" viewBox="0 0 14 18" style="display:block"><path d="M.6.700h7.700l4.500 4.500v11.500H.6z" fill="#ececec" stroke="#979797" stroke-width="1"/><path d="M8.300 1.200v4h4z" fill="#fff"/><path d="M8.300 5.200h4v3.600z" fill="#b8b8b8"/></svg></div>
<div class="t" style="left:94.0px;top:718.0px">Der Darm und sein Gefühl im Hirn</div>
<div class="abs" style="left:0;top:0;width:1px;height:726px;background:#fff"></div>
</div>
<div id="sb"><div class="th"></div><svg width="15" height="17" viewBox="0 0 15 17" style="position:absolute;left:0px;top:0px;"><path d="M4.500 11.400l3-3.300 3 3.300" fill="none" stroke="#454545" stroke-width="2.100"/></svg></div>
<div id="main">
<h2 style="left:26.5px;top:16.1px">Kategorie</h2>
<div class="inp" style="left:26px;top:50px;width:568px;height:28px;border-radius:3px"><span class="txt" style="left:9px;top:5.5px;font-family:'Liberation Sans',sans-serif;font-size:12.75px;color:#111">THEME - DESIGN - MAINCONTENT (9)</span><svg width="568" height="28" viewBox="0 0 568 28" style="position:absolute;left:-1px;top:-1px;"><path d="M550.1999999999999 12.049999999999999l3.1 3.1 3.1-3.1" fill="none" stroke="#000" stroke-width="2.1"/></svg></div>
<h2 style="left:26.5px;top:139.3px">Fließtext</h2>
<div class="abs" style="left:26px;top:174px;width:568px;height:546px;background:#fafafa;border:1px solid #ccc"></div>
<div class="abs" style="left:27px;top:307.0px;width:566px;height:1px;background:#ccc"></div>
<div class="abs" style="left:27px;top:434.5px;width:566px;height:1px;background:#ccc"></div>
<div class="abs" style="left:27px;top:561.7px;width:566px;height:1px;background:#ccc"></div>
<div class="txt" style="left:40px;top:193.7px;color:#333;font-weight:bold;color:#000;font-size:12.75px">Schriftart</div>
<div class="txt" style="left:40px;top:225.3px;color:#333;">[plugin.tx_typo3projectprovider.maincontentBodyFontFamily]</div>
<div class="inp" style="left:71.60000000000002px;top:252.2px;width:508.4px;height:34.6px;background:#f1f1f1;border-radius:0 2px 2px 0"><span class="txt" style="left:7.5px;top:9.8px;color:#c9c9c9;font-size:13.0px">Source Sans Pro</span></div>
<div class="addon" style="left:40px;top:252.2px;width:32.6px;height:34.6px"><svg width="32" height="35" viewBox="0 0 32 35" style="position:absolute;left:-1px;top:-1px;"><g transform="rotate(45 16.200 17.500) translate(16.2 17.5) scale(1.22) translate(-16.2 -17.5)"><rect x="14" y="10" width="4.400" height="2.200" rx=".5" fill="#111"/><rect x="14" y="13" width="4.400" height="7.600" fill="#111"/><path d="M14 21.300h4.400l-2.200 3.700z" fill="#111"/></g></svg></div>
<div class="txt" style="left:40px;top:353.0px;color:#333;">[plugin.tx_typo3projectprovider.maincontentBody__size]</div>
<div class="inp" style="left:71.60000000000002px;top:380.2px;width:508.4px;height:34.6px;background:#fff;border-radius:0 2px 2px 0"><span class="txt" style="left:8px;top:9.3px;color:#222;font-size:12.4px">18px</span></div>
<div class="addon" style="left:40px;top:380.2px;width:32.6px;height:34.6px"><svg width="32" height="35" viewBox="0 0 32 35" style="position:absolute;left:-1px;top:-1px;"><path d="M12.200 14.300a5.500 5.500 0 1 1-.8 5.800" fill="none" stroke="#111" stroke-width="1.400"/><path d="M10.300 11.200v4.700h4.700z" fill="#111"/></svg></div>
<div class="txt" style="left:40px;top:480.8px;color:#333;">[plugin.tx_typo3projectprovider.maincontentBody__weight]</div>
<div class="inp" style="left:71.60000000000002px;top:507.6px;width:508.4px;height:34.6px;background:#fff;border-radius:0 2px 2px 0"><span class="txt" style="left:12px;top:9.3px;color:#222;font-size:12.4px">300</span><svg width="509" height="35" viewBox="0 0 509 35" style="position:absolute;left:-1px;top:-1px;"><path d="M491.4 15.75l3.1 3.1 3.1-3.1" fill="none" stroke="#000" stroke-width="2.1"/></svg></div>
<div class="addon" style="left:40px;top:507.6px;width:32.6px;height:34.6px"><svg width="32" height="35" viewBox="0 0 32 35" style="position:absolute;left:-1px;top:-1px;"><path d="M12.200 14.300a5.500 5.500 0 1 1-.8 5.800" fill="none" stroke="#111" stroke-width="1.400"/><path d="M10.300 11.200v4.700h4.700z" fill="#111"/></svg></div>
<div class="txt" style="left:40px;top:608.0px;color:#333;">[plugin.tx_typo3projectprovider.maincontentBodyLineHeight]</div>
<div class="txt" style="left:40px;top:638.3px;color:#333;word-spacing:.58px">Bei sehr textlastigen Webseiten empfielt es sich auf 2 fachen Abstand zu gehen.</div>
<div class="inp" style="left:71.60000000000002px;top:665.2px;width:508.4px;height:34.6px;background:#fdf6bb;border-radius:0 2px 2px 0"><span class="txt" style="left:8px;top:10.5px;color:#222;font-size:12.4px">1,5</span></div>
<div class="addon" style="left:40px;top:665.2px;width:32.6px;height:34.6px"><svg width="32" height="35" viewBox="0 0 32 35" style="position:absolute;left:-1px;top:-1px;"><path d="M12.200 14.300a5.500 5.500 0 1 1-.8 5.800" fill="none" stroke="#111" stroke-width="1.400"/><path d="M10.300 11.200v4.700h4.700z" fill="#111"/></svg></div>
</div>
<svg width="1193" height="798" viewBox="0 0 1193 798" style="position:absolute;left:0;top:0;z-index:100;opacity:.82;pointer-events:none"><defs><filter id="sh" x="-20%" y="-20%" width="140%" height="140%"><feDropShadow dx="1" dy="2" stdDeviation="2.500" flood-color="#000" flood-opacity=".35"/></filter></defs><g filter="url(#sh)"><line x1="355.3" y1="121.5" x2="381.1" y2="111.6" stroke="#f37d3f" stroke-width="2"/><circle cx="355.3" cy="121.5" r="4.700" fill="#f37d3f"/><circle cx="400.2" cy="104.3" r="19.4" fill="none" stroke="#f37d3f" stroke-width="2"/><clipPath id="c1"><path d="M390.2 92.3h20v15.3h-20zM399.0 107.5h4.2v6h-4.2z"/></clipPath><text clip-path="url(#c1)" x="400.2" y="112.0" text-anchor="middle" font-family="Liberation Sans, Arial, sans-serif" font-weight="bold" font-size="23.6" fill="#f37d3f">1</text><line x1="119.4" y1="301" x2="151.0" y2="288.5" stroke="#f37d3f" stroke-width="2"/><circle cx="119.4" cy="301" r="4.700" fill="#f37d3f"/><circle cx="170" cy="281" r="19.4" fill="none" stroke="#f37d3f" stroke-width="2"/><text x="170" y="288.7" text-anchor="middle" font-family="Liberation Sans, Arial, sans-serif" font-weight="bold" font-size="23.6" fill="#f37d3f">2</text><circle cx="1117.2" cy="136.9" r="19.4" fill="none" stroke="#f37d3f" stroke-width="2"/><text x="1117.2" y="144.6" text-anchor="middle" font-family="Liberation Sans, Arial, sans-serif" font-weight="bold" font-size="23.6" fill="#f37d3f">3</text><circle cx="714.3" cy="755.8" r="19.4" fill="none" stroke="#f37d3f" stroke-width="2"/><text x="714.3" y="763.5" text-anchor="middle" font-family="Liberation Sans, Arial, sans-serif" font-weight="bold" font-size="23.6" fill="#f37d3f">4</text><line x1="604.1" y1="53.4" x2="574.8" y2="55.5" stroke="#f37d3f" stroke-width="2"/><circle cx="604.1" cy="53.4" r="4.700" fill="#f37d3f"/><circle cx="554.5" cy="57" r="19.4" fill="none" stroke="#f37d3f" stroke-width="2"/><text x="554.5" y="64.7" text-anchor="middle" font-family="Liberation Sans, Arial, sans-serif" font-weight="bold" font-size="23.6" fill="#f37d3f">5</text><rect x="603.800" y="123.300" width="251.400" height="27" rx="4.500" fill="none" stroke="#f37d3f" stroke-width="2"/></g></svg>
</body></html>
